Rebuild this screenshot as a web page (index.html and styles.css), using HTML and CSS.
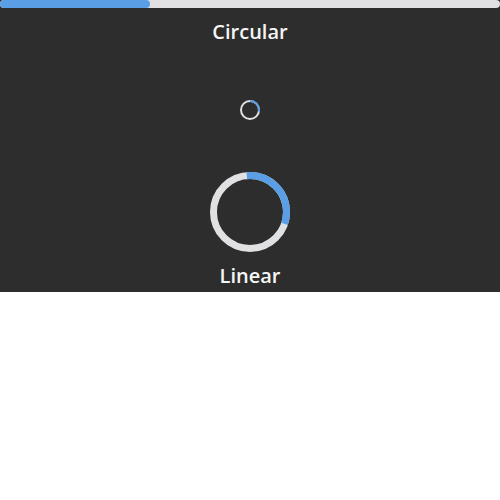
FILE: index.html
```html
<!DOCTYPE html>
<html>
<head>
<meta charset="utf-8">
<link rel="stylesheet" href="styles.css">
</head>
<body>
<div class="panel">
  <div class="bar"><div class="bar-fill" style="width:150px"></div></div>
  <div class="title">Circular</div>
  <svg class="spin-small" width="22" height="22" viewBox="0 0 22 22">
    <circle cx="11" cy="11" r="9" fill="none" stroke="#e1e1e3" stroke-width="2"/>
    <circle cx="11" cy="11" r="9" fill="none" stroke="#5a9ee6" stroke-width="2" stroke-dasharray="15.7 60" transform="rotate(-90 11 11)"/>
  </svg>
  <svg class="spin-big" width="80" height="80" viewBox="0 0 80 80">
    <circle cx="40" cy="40" r="36.5" fill="none" stroke="#e1e1e3" stroke-width="7"/>
    <circle cx="40" cy="40" r="36.5" fill="none" stroke="#5a9ee6" stroke-width="7" stroke-dasharray="72.6 240" transform="rotate(-95 40 40)"/>
  </svg>
  <div class="title label">Linear</div>
</div>
</body>
</html>
```
FILE: styles.css
```css
html, body {
  margin: 0;
  padding: 0;
  background: #ffffff;
}
.panel {
  width: 500px;
  height: 292px;
  background: #2d2d2d;
  display: flex;
  flex-direction: column;
  align-items: center;
  overflow: hidden;
}
.bar {
  width: 500px;
  height: 8px;
  border-radius: 4px;
  background: #e1e1e3;
  display: flex;
}
.bar-fill {
  height: 8px;
  border-radius: 4px;
  background: #5a9ee6;
}
.title {
  margin-top: 10px;
  font-family: "Open Sans", "Noto Sans", sans-serif;
  font-size: 20px;
  font-weight: 600;
  line-height: 27px;
  color: #f6f6f6;
}
.spin-small {
  display: block;
  margin-top: 54px;
}
.spin-big {
  display: block;
  margin-top: 51px;
}
.label {
  margin-top: 10px;
}
```
